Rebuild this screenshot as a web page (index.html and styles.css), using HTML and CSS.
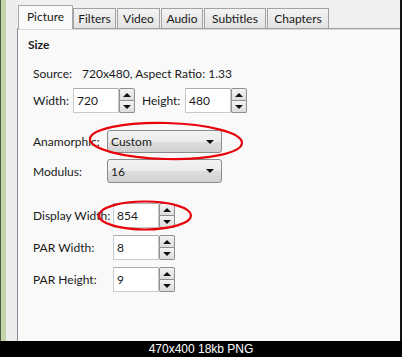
FILE: index.html
```html
<!DOCTYPE html>
<html>
<head>
<meta charset="utf-8">
<link rel="stylesheet" href="styles.css">
</head>
<body>
<div class="frame">
  <div class="shot">
    <div class="edge-dark"></div>
    <div class="edge-green"></div>
    <div class="edge-gray"></div>
    <div class="window">
      <div class="tabstrip">
        <div class="tab active t-picture">Picture</div>
        <div class="tab t-filters">Filters</div>
        <div class="tab t-video">Video</div>
        <div class="tab t-audio">Audio</div>
        <div class="tab t-subs">Subtitles</div>
        <div class="tab t-chap">Chapters</div>
      </div>
      <div class="panel">
        <div class="heading">Size</div>
        <div class="row source">
          <span class="lbl lbl-src">Source:</span>
          <span class="src-val">720x480, Aspect Ratio: 1.33</span>
        </div>
        <div class="row r-size">
          <span class="lbl lbl-w">Width:</span>
          <div class="input">720</div>
          <div class="spin"><span class="up"></span><span class="down"></span></div>
          <span class="lbl lbl-h">Height:</span>
          <div class="input">480</div>
          <div class="spin"><span class="up"></span><span class="down"></span></div>
        </div>
        <div class="row r-ana">
          <span class="lbl lbl-a">Anamorphic:</span>
          <div class="combo">Custom<span class="caret"></span></div>
        </div>
        <div class="row r-mod">
          <span class="lbl lbl-a">Modulus:</span>
          <div class="combo">16<span class="caret"></span></div>
        </div>
        <div class="row r-disp">
          <span class="lbl lbl-d">Display Width:</span>
          <div class="input">854</div>
          <div class="spin"><span class="up"></span><span class="down"></span></div>
        </div>
        <div class="row r-par">
          <span class="lbl lbl-d">PAR Width:</span>
          <div class="input">8</div>
          <div class="spin"><span class="up"></span><span class="down"></span></div>
        </div>
        <div class="row r-par">
          <span class="lbl lbl-d">PAR Height:</span>
          <div class="input">9</div>
          <div class="spin"><span class="up"></span><span class="down"></span></div>
        </div>
      </div>
    </div>
    <div class="edge-right"></div>
  </div>
  <div class="caption">470x400 18kb PNG</div>
  <svg class="marks" width="402" height="357" viewBox="0 0 402 357">
    <ellipse cx="166" cy="141" rx="76" ry="18" fill="none" stroke="#e8000a" stroke-width="2.2" transform="rotate(1.5 166 141)"/>
    <ellipse cx="145" cy="215.5" rx="46" ry="14" fill="none" stroke="#e8000a" stroke-width="2.2"/>
  </svg>
</div>
</body>
</html>
```
FILE: styles.css
```css
html, body {
  margin: 0;
  padding: 0;
  background: #000;
}
.frame {
  position: relative;
  width: 402px;
  height: 357px;
  display: flex;
  flex-direction: column;
  font-family: Lato, "Noto Sans", sans-serif;
  font-size: 12px;
  color: #1a1a1a;
}
.shot {
  height: 341px;
  display: flex;
  background: #f0f0f0;
}
.edge-dark { width: 1px; background: #4a5a3a; }
.edge-green { width: 5px; background: #c3d3aa; }
.edge-gray { width: 11px; background: #ececec; }
.edge-right { width: 2px; background: #111; }
.window {
  flex: 1;
  display: flex;
  flex-direction: column;
}
.tabstrip {
  height: 28px;
  display: flex;
  align-items: flex-end;
  background: #f0f0f0;
  padding-left: 1px;
}
.tab {
  box-sizing: border-box;
  height: 20px;
  display: flex;
  align-items: center;
  justify-content: center;
  border: 1px solid #a3a3a3;
  border-bottom: none;
  background: linear-gradient(#f3f3f3, #e3e3e3);
  margin-right: 1px;
}
.tab.active {
  height: 24px;
  background: #fafafa;
  border-color: #a9a9a9;
  margin-bottom: -1px;
  margin-right: 0;
  padding-bottom: 3px;
  position: relative;
  z-index: 1;
}
.t-picture { width: 55px; }
.t-filters { width: 43px; }
.t-video { width: 43px; }
.t-audio { width: 42px; }
.t-subs { width: 62px; }
.t-chap { width: 62px; }
.panel {
  flex: 1;
  background: #f9f9f9;
  border-top: 1px solid #a0a0a0;
  border-left: 1px solid #8c8c9c;
  box-shadow: inset 0 1px 0 #d9d9d9;
  padding: 8px 0 0 10px;
  display: flex;
  flex-direction: column;
}
.heading {
  font-weight: bold;
  height: 16px;
  line-height: 16px;
}
.row {
  display: flex;
  align-items: center;
  padding-left: 5px;
}
.source { height: 16px; margin-top: 12px; }
.src-val { white-space: nowrap; }
.r-size { height: 25px; margin-top: 7px; }
.r-ana { height: 23px; margin-top: 17px; }
.r-mod { height: 24px; margin-top: 6px; }
.r-disp { height: 25px; margin-top: 20px; }
.r-par { height: 25px; margin-top: 7px; }
.lbl-src { width: 49px; }
.lbl-w { width: 40px; }
.lbl-h { width: 43px; margin-left: 7px; }
.lbl-a { width: 74px; }
.lbl-d { width: 80px; }
.input {
  box-sizing: border-box;
  width: 46px;
  height: 25px;
  background: #fff;
  border: 1px solid #c5cad2;
  border-top-color: #abadb3;
  padding-left: 3px;
  display: flex;
  align-items: center;
}
.spin {
  box-sizing: border-box;
  width: 16px;
  height: 25px;
  display: flex;
  flex-direction: column;
}
.spin span {
  flex: 1;
  box-sizing: border-box;
  border: 1px solid #8e8f8f;
  background: linear-gradient(#f4f4f4, #dcdcdc);
  display: flex;
  align-items: center;
  justify-content: center;
}
.spin .up { border-radius: 2px 2px 0 0; }
.spin .down { border-radius: 0 0 2px 2px; border-top: none; }
.spin .up::after {
  content: "";
  border-left: 4px solid transparent;
  border-right: 4px solid transparent;
  border-bottom: 4px solid #111;
}
.spin .down::after {
  content: "";
  border-left: 4px solid transparent;
  border-right: 4px solid transparent;
  border-top: 4px solid #111;
}
.combo {
  box-sizing: border-box;
  width: 115px;
  height: 23px;
  border: 1px solid #8a8a8a;
  border-radius: 3px;
  background: linear-gradient(#f3f3f3 0%, #ebebeb 50%, #dddddd 51%, #d2d2d2 100%);
  padding-left: 3px;
  padding-right: 7px;
  display: flex;
  align-items: center;
  justify-content: space-between;
}
.r-mod .combo { height: 24px; }
.caret {
  border-left: 4px solid transparent;
  border-right: 4px solid transparent;
  border-top: 4px solid #111;
}
.caption {
  height: 16px;
  background: #000;
  color: #fff;
  font-family: "Liberation Sans", Arial, sans-serif;
  font-size: 12px;
  line-height: 16px;
  text-align: center;
}
.marks {
  position: absolute;
  left: 0;
  top: 0;
  pointer-events: none;
}
```
